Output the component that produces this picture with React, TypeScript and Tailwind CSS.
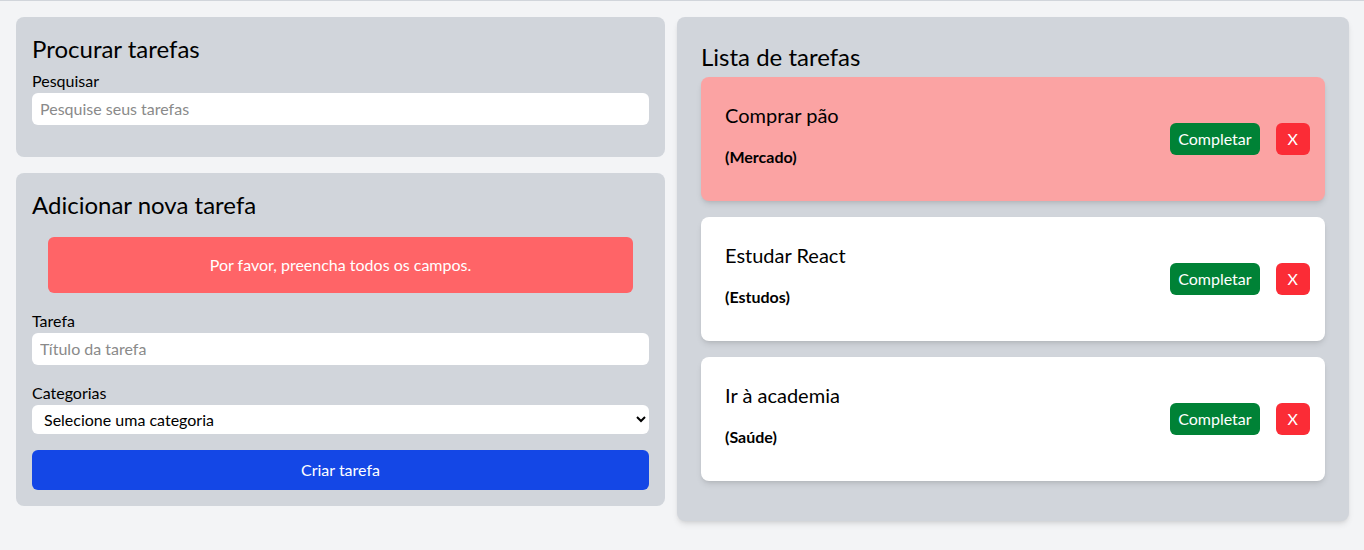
import React from "react";

type Task = {
  title: string;
  category: string;
  highlight?: boolean;
};

const tasks: Task[] = [
  { title: "Comprar pão", category: "Mercado", highlight: true },
  { title: "Estudar React", category: "Estudos" },
  { title: "Ir à academia", category: "Saúde" },
];

function TaskCard({ task }: { task: Task }) {
  return (
    <div
      className={`flex items-center justify-between rounded-lg pt-6 pb-6 pl-6 pr-[15px] mb-4 shadow-md ${
        task.highlight ? "bg-[#fba3a3]" : "bg-white"
      }`}
    >
      <div>
        <h3 className="text-xl leading-7">{task.title}</h3>
        <p className="font-bold mt-4 mb-2">({task.category})</p>
      </div>
      <div className="flex items-center gap-4">
        <button className="bg-[#008236] text-white rounded-md px-2 h-8">Completar</button>
        <button className="bg-[#fb2c36] text-white rounded-md px-3 h-8">X</button>
      </div>
    </div>
  );
}

export default function App() {
  return (
    <div
      className="min-h-[550px] bg-[#f3f4f6] border-t border-[#d1d5db] text-black"
      style={{ fontFamily: "Lato, sans-serif" }}
    >
      <div className="flex items-start gap-3 pt-4 pl-4 pr-[15px]">
        {/* Left column */}
        <div className="w-[649px] flex flex-col gap-4">
          <div className="bg-[#d1d5db] rounded-lg p-4">
            <h2 className="text-2xl leading-8 mb-1">Procurar tarefas</h2>
            <label className="block">Pesquisar</label>
            <input
              className="w-full bg-white rounded-md px-2 py-1 mb-4 outline-none placeholder:text-[#8a8a8a]"
              placeholder="Pesquise seus tarefas"
            />
          </div>

          <div className="bg-[#d1d5db] rounded-lg p-4">
            <h2 className="text-2xl leading-8">Adicionar nova tarefa</h2>
            <div className="mx-4 mt-4 mb-4 bg-[#ff6467] text-white text-center rounded-md p-4">
              Por favor, preencha todos os campos.
            </div>
            <label className="block">Tarefa</label>
            <input
              className="w-full bg-white rounded-md px-2 py-1 mb-4 outline-none placeholder:text-[#8a8a8a]"
              placeholder="Título da tarefa"
            />
            <label className="block">Categorias</label>
            <select className="w-full h-[29px] bg-white rounded-md px-2 mb-4 outline-none">
              <option>Selecione uma categoria</option>
              <option>Mercado</option>
              <option>Estudos</option>
              <option>Saúde</option>
            </select>
            <button className="w-full bg-[#1447e6] text-white rounded-md py-2">Criar tarefa</button>
          </div>
        </div>

        {/* Right column */}
        <div className="flex-1 bg-[#d1d5db] rounded-lg p-6 pb-6 shadow-md">
          <h2 className="text-2xl leading-8 mb-1">Lista de tarefas</h2>
          {tasks.map((t) => (
            <TaskCard key={t.title} task={t} />
          ))}
        </div>
      </div>
    </div>
  );
}
